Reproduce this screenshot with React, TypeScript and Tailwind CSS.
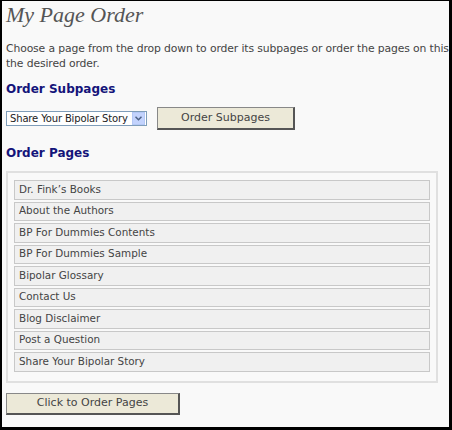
const pages = [
  "Dr. Fink’s Books",
  "About the Authors",
  "BP For Dummies Contents",
  "BP For Dummies Sample",
  "Bipolar Glossary",
  "Contact Us",
  "Blog Disclaimer",
  "Post a Question",
  "Share Your Bipolar Story",
];

const verdana = "font-['DejaVu_Sans',Verdana,sans-serif]";

export default function App() {
  return (
    <div
      className={`w-[452px] h-[430px] overflow-hidden bg-[#f9f9f9] border-black border-l-2 border-t-[1px] border-r-[3px] border-b-[3px] pl-[4px] ${verdana}`}
    >
      <h1 className="pt-[2px] text-[22px] leading-[24px] italic text-[#555] font-['Liberation_Serif',Georgia,serif]">
        My Page Order
      </h1>

      <p className="mt-[14px] w-[443px] text-[10.8px] leading-[15px] tracking-[-0.12px] text-[#444]">
        Choose a page from the drop down to order its subpages or order the pages on this the desired order.
      </p>

      <h2 className="mt-[10px] text-[12px] leading-[16px] font-bold text-[#14147a]">Order Subpages</h2>

      <div className="mt-[10px] flex items-center gap-[10px]">
        <div className="flex items-center w-[141px] h-[15px] border border-[#7f9db9] bg-white pl-[3px] pr-[1px]">
          <span className="flex-1 text-[10px] leading-[13px] tracking-[-0.15px] text-[#222]">Share Your Bipolar Story</span>
          <span className="w-[13px] h-[13px] flex items-center justify-center bg-[#c3d3fd] border border-[#b4c8f6]">
            <svg width="7" height="5" viewBox="0 0 7 5">
              <path d="M0.5 0.8 L3.5 3.8 L6.5 0.8" fill="none" stroke="#4d6185" strokeWidth="1.5" />
            </svg>
          </span>
        </div>
        <button className="w-[138px] h-[23px] bg-[#ece9d8] border border-[#888] border-r-2 border-b-2 border-r-[#555] border-b-[#555] text-[11px] text-[#444]">
          Order Subpages
        </button>
      </div>

      <h2 className="mt-[15px] text-[12px] leading-[16px] font-bold text-[#14147a]">Order Pages</h2>

      <div className="mt-[10px] w-[432px] border-2 border-[#e0e0e0] px-[6px] pt-[7px] pb-[9px] flex flex-col gap-[2px]">
        {pages.map((p) => (
          <div
            key={p}
            className="h-[19.5px] flex items-center border border-[#c8c8c8] bg-[#f0f0f0] pl-[4px] text-[10.4px] text-[#444]"
          >
            {p}
          </div>
        ))}
      </div>

      <button className="mt-[10px] w-[174px] h-[22px] bg-[#ece9d8] border border-[#888] border-r-2 border-b-2 border-r-[#555] border-b-[#555] text-[11px] text-[#444]">
        Click to Order Pages
      </button>
    </div>
  );
}
